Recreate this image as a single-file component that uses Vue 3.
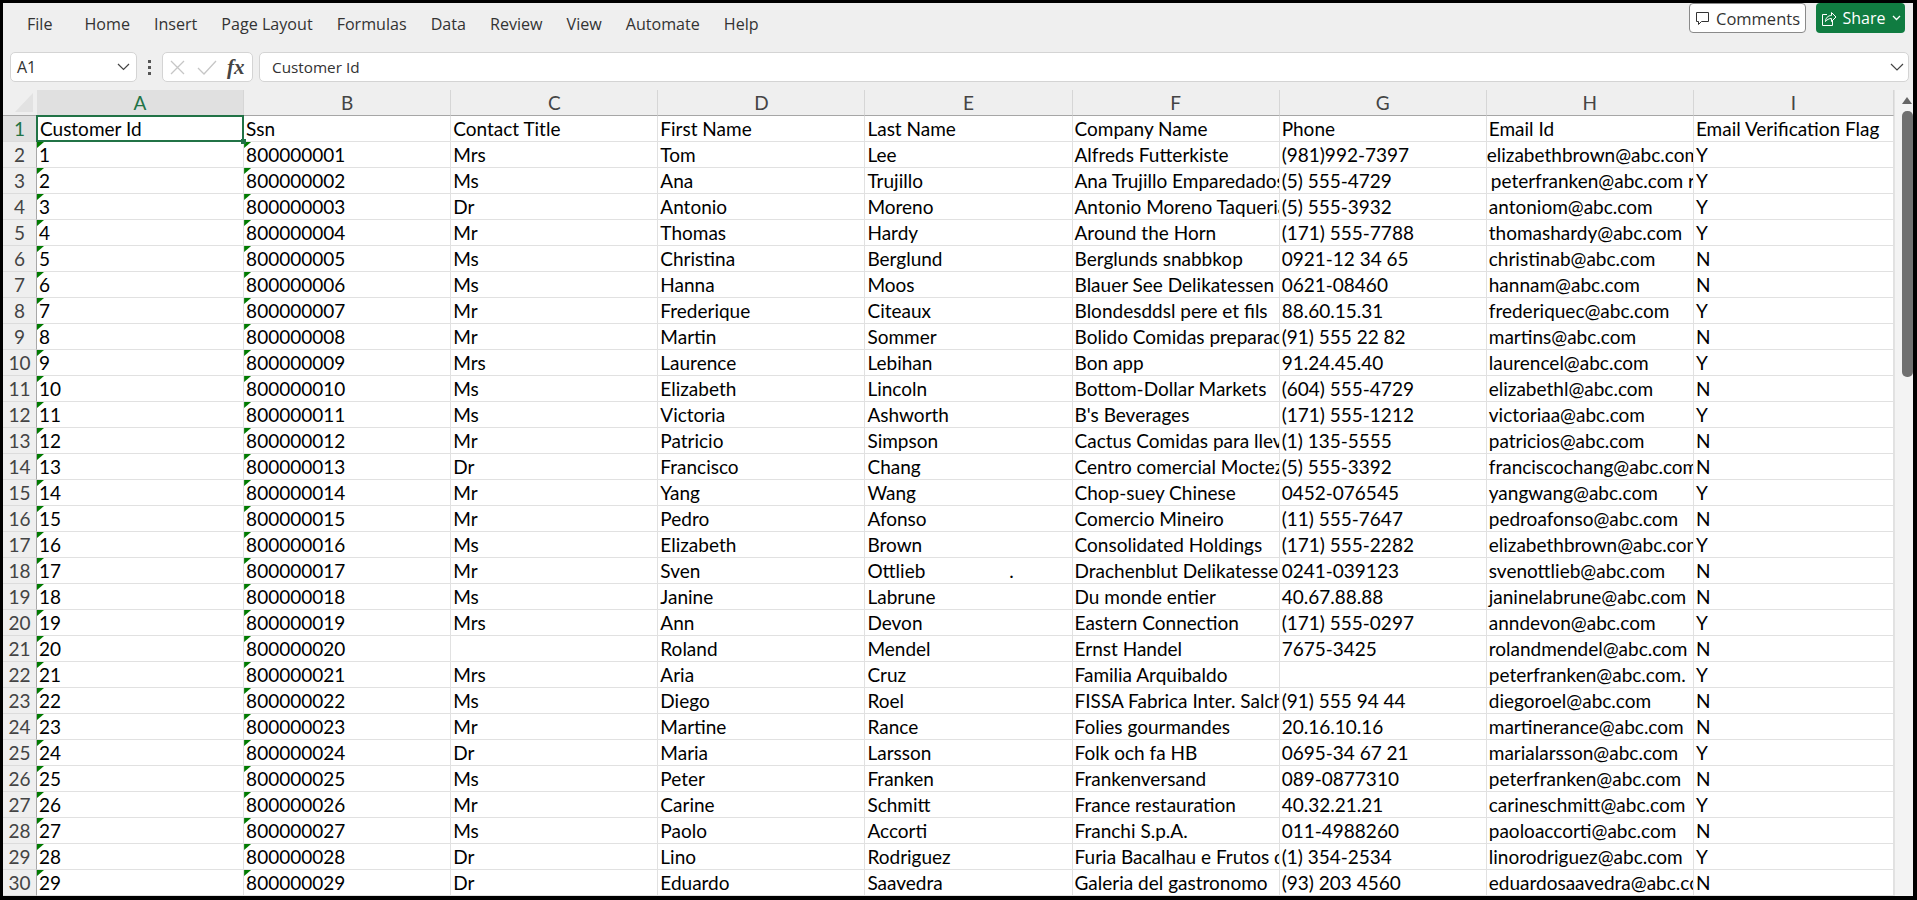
<script setup>
const menus = ['Home', 'Insert', 'Page Layout', 'Formulas', 'Data', 'Review', 'View', 'Automate', 'Help']
const letters = ['A', 'B', 'C', 'D', 'E', 'F', 'G', 'H', 'I']
const headers = ['Customer Id', 'Ssn', 'Contact Title', 'First Name', 'Last Name', 'Company Name', 'Phone', 'Email Id', 'Email Verification Flag']
const raw = `Mrs|Tom|Lee|Alfreds Futterkiste|(981)992-7397|elizabethbrown@abc.com|Y
Ms|Ana|Trujillo|Ana Trujillo Emparedados|(5) 555-4729|peterfranken@abc.com r|Y
Dr|Antonio|Moreno|Antonio Moreno Taqueria|(5) 555-3932|antoniom@abc.com|Y
Mr|Thomas|Hardy|Around the Horn|(171) 555-7788|thomashardy@abc.com|Y
Ms|Christina|Berglund|Berglunds snabbkop|0921-12 34 65|christinab@abc.com|N
Ms|Hanna|Moos|Blauer See Delikatessen|0621-08460|hannam@abc.com|N
Mr|Frederique|Citeaux|Blondesddsl pere et fils|88.60.15.31|frederiquec@abc.com|Y
Mr|Martin|Sommer|Bolido Comidas preparadas|(91) 555 22 82|martins@abc.com|N
Mrs|Laurence|Lebihan|Bon app|91.24.45.40|laurencel@abc.com|Y
Ms|Elizabeth|Lincoln|Bottom-Dollar Markets|(604) 555-4729|elizabethl@abc.com|N
Ms|Victoria|Ashworth|B's Beverages|(171) 555-1212|victoriaa@abc.com|Y
Mr|Patricio|Simpson|Cactus Comidas para llevar|(1) 135-5555|patricios@abc.com|N
Dr|Francisco|Chang|Centro comercial Moctezuma|(5) 555-3392|franciscochang@abc.com|N
Mr|Yang|Wang|Chop-suey Chinese|0452-076545|yangwang@abc.com|Y
Mr|Pedro|Afonso|Comercio Mineiro|(11) 555-7647|pedroafonso@abc.com|N
Ms|Elizabeth|Brown|Consolidated Holdings|(171) 555-2282|elizabethbrown@abc.com|Y
Mr|Sven|Ottlieb|Drachenblut Delikatessen|0241-039123|svenottlieb@abc.com|N
Ms|Janine|Labrune|Du monde entier|40.67.88.88|janinelabrune@abc.com|N
Mrs|Ann|Devon|Eastern Connection|(171) 555-0297|anndevon@abc.com|Y
|Roland|Mendel|Ernst Handel|7675-3425|rolandmendel@abc.com|N
Mrs|Aria|Cruz|Familia Arquibaldo||peterfranken@abc.com.|Y
Ms|Diego|Roel|FISSA Fabrica Inter. Salchicherias|(91) 555 94 44|diegoroel@abc.com|N
Mr|Martine|Rance|Folies gourmandes|20.16.10.16|martinerance@abc.com|N
Dr|Maria|Larsson|Folk och fa HB|0695-34 67 21|marialarsson@abc.com|Y
Ms|Peter|Franken|Frankenversand|089-0877310|peterfranken@abc.com|N
Mr|Carine|Schmitt|France restauration|40.32.21.21|carineschmitt@abc.com|Y
Ms|Paolo|Accorti|Franchi S.p.A.|011-4988260|paoloaccorti@abc.com|N
Dr|Lino|Rodriguez|Furia Bacalhau e Frutos do Mar|(1) 354-2534|linorodriguez@abc.com|Y
Dr|Eduardo|Saavedra|Galeria del gastronomo|(93) 203 4560|eduardosaavedra@abc.com|N`
const rows = raw.split('\n').map((line, i) => [String(i + 1), String(800000001 + i), ...line.split('|')])
</script>

<template>
  <div class="app">
    <header class="menubar">
      <nav class="menus">
        <span class="menu file">File</span>
        <span v-for="m in menus" :key="m" class="menu">{{ m }}</span>
      </nav>
      <div class="actions">
        <button class="btn comments">
          <svg width="15" height="15" viewBox="0 0 15 15" fill="none" stroke="#333" stroke-width="1">
            <path d="M1.5 1.5h12v9H6.5l-3 3v-3h-2z" />
          </svg>
          Comments
        </button>
        <button class="btn share">
          <svg width="16" height="17" viewBox="0 0 16 17" fill="none" stroke="#fff" stroke-width="1">
            <path d="M6 4.5H1.5v11h10V11" />
            <path d="M4.5 11.5c0-3.5 2.5-6 6-6V2.5l4.5 4.5-4.5 4.5V8.5c-2.500 0-4.500 1-6 3z" />
          </svg>
          Share
          <svg width="9" height="6" viewBox="0 0 9 6" fill="none" stroke="#fff" stroke-width="1.300">
            <path d="M1 1l3.500 3.500L8 1" />
          </svg>
        </button>
      </div>
    </header>

    <section class="formula-row">
      <div class="namebox">
        <span>A1</span>
        <svg width="13" height="8" viewBox="0 0 13 8" fill="none" stroke="#444" stroke-width="1.200">
          <path d="M1 1l5.500 5.500L12 1" />
        </svg>
      </div>
      <div class="dots"><i></i><i></i><i></i></div>
      <div class="fxbox">
        <svg width="15" height="15" viewBox="0 0 15 15" fill="none" stroke="#c6c6c6" stroke-width="1.300">
          <path d="M1 1l13 13M14 1L1 14" />
        </svg>
        <svg width="20" height="15" viewBox="0 0 20 15" fill="none" stroke="#c6c6c6" stroke-width="1.300">
          <path d="M1 8l6 6L19 1" />
        </svg>
        <span class="fx">fx</span>
      </div>
      <div class="formula">
        <span>Customer Id</span>
        <svg width="14" height="8" viewBox="0 0 14 8" fill="none" stroke="#444" stroke-width="1.200">
          <path d="M1 1l6 6 6-6" />
        </svg>
      </div>
    </section>

    <section class="sheet">
      <div class="grid">
        <div class="corner"><span class="corner-mark"></span></div>
        <div v-for="(l, i) in letters" :key="l" class="col-head" :class="{ active: i === 0 }">{{ l }}</div>

        <div class="row-head active">1</div>
        <div v-for="(h, i) in headers" :key="h" class="cell" :class="{ selected: i === 0 }">{{ h }}<span v-if="i === 0" class="handle"></span></div>

        <template v-for="(row, r) in rows" :key="r">
          <div class="row-head">{{ r + 2 }}</div>
          <div
            v-for="(value, c) in row"
            :key="c"
            class="cell"
            :class="{ flagged: c < 2, shifted: r === 0 && c === 7, nudged: r === 1 && c === 7 }"
          >{{ value }}<span v-if="r === 16 && c === 4" class="stray">.</span></div>
        </template>
      </div>

      <aside class="scrollbar">
        <span class="arrow"></span>
        <span class="thumb"></span>
      </aside>
    </section>
  </div>
</template>

<style>
html, body { margin: 0; padding: 0; overflow: hidden; }
</style>

<style scoped>
.app {
  box-sizing: border-box;
  width: 1917px;
  height: 900px;
  border: solid #000;
  border-width: 3px 4px 4px 3px;
  background: #efefef;
  display: flex;
  flex-direction: column;
  overflow: hidden;
  font-family: "Open Sans", "Noto Sans", sans-serif;
  color: #333;
}
.menubar {
  flex: none;
  height: 42px;
  display: flex;
  align-items: center;
  justify-content: space-between;
  padding: 0 8px 0 24px;
}
.menus { display: flex; gap: 24px; font-size: 16.100px; }
.file { margin-right: 8px; }
.menu { white-space: nowrap; }
.actions { display: flex; gap: 10px; margin-top: -12px; }
.btn {
  box-sizing: border-box;
  height: 30px;
  display: flex;
  align-items: center;
  justify-content: center;
  font-family: inherit;
  font-size: 16.500px;
  border-radius: 4px;
  padding: 0;
}
.comments { width: 117px; gap: 6px; background: #fff; border: 1px solid #8a8a8a; color: #333; }
.share { width: 89px; gap: 6px; background: #107c41; border: 0; color: #fff; font-size: 16px; }

.formula-row {
  flex: none;
  height: 30px;
  display: flex;
  align-items: stretch;
  padding: 7px 4px 8px 7px;
}
.namebox, .fxbox, .formula {
  box-sizing: border-box;
  background: #fff;
  border: 1px solid #d4d4d4;
  border-radius: 5px;
  display: flex;
  align-items: center;
}
.namebox {
  width: 127px;
  justify-content: space-between;
  padding: 0 6px 0 6px;
  font-size: 16px;
}
.dots {
  width: 25px;
  display: flex;
  flex-direction: column;
  align-items: center;
  justify-content: center;
  gap: 3px;
}
.dots i { width: 3px; height: 3px; background: #555; }
.fxbox { width: 91px; padding: 0 6px 0 7px; gap: 12px; }
.fx {
  font-family: "Liberation Serif", serif;
  font-style: italic;
  font-weight: 700;
  font-size: 21px;
  color: #444;
  line-height: 1;
  margin-left: -2px;
}
.formula {
  flex: 1;
  margin-left: 6px;
  justify-content: space-between;
  padding: 0 4px 0 12px;
  font-size: 15.300px;
}

.sheet { flex: 1; min-height: 0; display: flex; }
.grid {
  flex: 1;
  display: grid;
  grid-template-columns: 34px repeat(8, 207.12px) 1fr;
  grid-auto-rows: 26px;
  grid-template-rows: 26px;
  background: #fff;
  font-family: Lato, "Open Sans", sans-serif;
  font-size: 19px;
  color: #000;
  overflow: hidden;
}
.corner, .col-head, .row-head {
  background: #efefef;
  color: #444;
  display: flex;
  align-items: center;
  justify-content: center;
}
.corner { border-bottom: 1px solid #a6a6a6; border-right: 1px solid #efefef; box-sizing: border-box; position: relative; }
.corner-mark {
  position: absolute;
  left: 12px;
  top: 3px;
  width: 18px;
  height: 19px;
  background: #e2e2e2;
  clip-path: polygon(100% 0, 100% 100%, 0 100%);
}
.col-head {
  box-sizing: border-box;
  border-bottom: 1px solid #a6a6a6;
  border-right: 1px solid #d6d6d6;
}
.col-head.active { background: #e0e0e0; color: #217346; }
.row-head {
  box-sizing: border-box;
  border-right: 1px solid #a8a8a8;
  border-bottom: 1px solid #dcdcdc;
}
.row-head.active { background: #e0e0e0; color: #217346; }
.cell {
  box-sizing: border-box;
  position: relative;
  border-right: 1px solid #e1e1e1;
  border-bottom: 1px solid #e1e1e1;
  padding: 1px 0 0 2px;
  line-height: 24px;
  white-space: pre;
  overflow: hidden;
}
.cell.flagged::before {
  content: "";
  position: absolute;
  left: 0;
  top: 0;
  width: 7px;
  height: 6px;
  background: #007a00;
  clip-path: polygon(0 0, 100% 0, 0 100%);
}
.cell.selected { overflow: visible; z-index: 2; padding-left: 3px; }
.cell.selected::after {
  content: "";
  position: absolute;
  left: -1px;
  top: -1px;
  right: -1px;
  bottom: -1px;
  border: 2px solid #217346;
}
.handle {
  position: absolute;
  right: -3px;
  bottom: -3px;
  z-index: 1;
  width: 5px;
  height: 5px;
  background: #217346;
}
.cell.shifted { padding-left: 0; }
.cell.nudged { padding-left: 4px; }
.stray { margin-left: 84px; }

.scrollbar {
  flex: none;
  box-sizing: border-box;
  width: 19px;
  background: #f3f3f3;
  border-left: 1px solid #e2e2e2;
  display: flex;
  flex-direction: column;
  align-items: flex-end;
}
.arrow {
  margin: 7px 1px 0 0;
  width: 0;
  height: 0;
  border-left: 5px solid transparent;
  border-right: 5px solid transparent;
  border-bottom: 7px solid #666;
}
.thumb {
  margin-top: 7px;
  width: 11px;
  height: 266px;
  background: #707070;
  border-radius: 5px;
}
</style>
